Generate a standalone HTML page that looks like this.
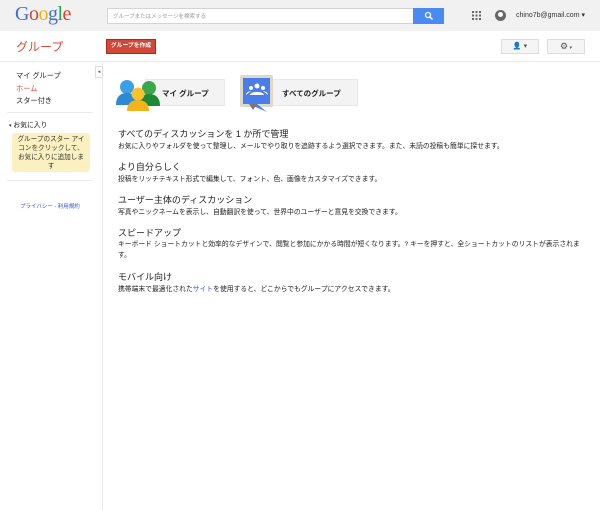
<!DOCTYPE html>
<html><head><meta charset="utf-8"><style>
*{margin:0;padding:0;box-sizing:border-box}
body{width:600px;height:510px;background:#fff;font-family:"Liberation Sans","Noto Sans CJK JP",sans-serif;color:#222;position:relative;overflow:hidden}
.a{position:absolute;white-space:nowrap}
.h{font-size:9px;color:#222}
.d{font-size:6.8px;color:#222}
</style></head><body>
<div class="a" style="left:0;top:0;width:600px;height:31px;background:#f1f1f1"></div>
<div class="a" style="left:15px;top:3px;font-family:'Liberation Serif',serif;font-size:20px;letter-spacing:-0.5px"><span style="color:#3b6fe0">G</span><span style="color:#d9412f">o</span><span style="color:#f2b400">o</span><span style="color:#3b6fe0">g</span><span style="color:#2ba14a">l</span><span style="color:#d9412f">e</span></div>
<div class="a" style="left:107px;top:8px;width:307px;height:16px;background:#fff;border:1px solid #d4d4d4"></div>
<div class="a" style="left:113px;top:12px;font-size:5.5px;color:#999">グループまたはメッセージを検索する</div>
<div class="a" style="left:413px;top:8px;width:31px;height:16px;background:#4a8af4"></div>
<svg class="a" style="left:424px;top:11px" width="10" height="10" viewBox="0 0 10 10"><circle cx="4" cy="4" r="2.5" fill="none" stroke="#fff" stroke-width="1.3"/><path d="M6 6L8.5 8.5" stroke="#fff" stroke-width="1.5"/></svg>
<svg class="a" style="left:472px;top:11px" width="9" height="9"><g fill="#666"><rect x="0" y="0" width="2" height="2"/><rect x="3.5" y="0" width="2" height="2"/><rect x="7" y="0" width="2" height="2"/><rect x="0" y="3.5" width="2" height="2"/><rect x="3.5" y="3.5" width="2" height="2"/><rect x="7" y="3.5" width="2" height="2"/><rect x="0" y="7" width="2" height="2"/><rect x="3.5" y="7" width="2" height="2"/><rect x="7" y="7" width="2" height="2"/></g></svg>
<div class="a" style="left:495px;top:10px;width:11px;height:11px;border-radius:50%;background:#666"></div>
<div class="a" style="left:498px;top:12px;width:5px;height:5px;border-radius:50%;background:#fff"></div>
<div class="a" style="left:516px;top:11px;font-size:7px;color:#333">chino7b@gmail.com ▾</div>
<div class="a" style="left:0;top:61px;width:600px;height:1px;background:#ebebeb"></div>
<div class="a" style="left:16px;top:38px;font-size:12px;color:#dd4b39">グループ</div>
<div class="a" style="left:106px;top:39px;width:50px;height:15px;background:#d14836;border:1px solid #b0281a;color:#fff;font-size:5.8px;font-weight:bold;text-align:center;line-height:13px">グループを作成</div>
<div class="a" style="left:501px;top:39px;width:38px;height:15px;background:#f5f5f5;border:1px solid #ddd;font-size:7px;color:#555;text-align:center;line-height:13px">👤 ▾</div>
<div class="a" style="left:547px;top:39px;width:38px;height:15px;background:#f5f5f5;border:1px solid #ddd;font-size:9px;color:#555;text-align:center;line-height:13px">⚙<span style="font-size:5px"> ▾</span></div>
<div class="a" style="left:102px;top:62px;width:1px;height:448px;background:#ebebeb"></div>
<div class="a" style="left:95px;top:66px;width:8px;height:12px;border:1px solid #ddd;background:#fff;font-size:5px;line-height:10px;text-align:center;color:#555">◂</div>
<div class="a" style="left:16px;top:70px;font-size:7.2px;line-height:12.5px;color:#222">マイ グループ<br><span style="color:#dd4b39">ホーム</span><br>スター付き</div>
<div class="a" style="left:7px;top:112px;width:86px;height:1px;background:#ebebeb"></div>
<div class="a" style="left:9px;top:119px;font-size:6.8px;color:#222"><span style="font-size:5px">▾</span> お気に入り</div>
<div class="a" style="left:12px;top:133px;width:78px;height:39px;background:#faf0c0;border-radius:3px;font-size:6.6px;line-height:9px;text-align:center;white-space:normal;padding:2px 5px 0;color:#333">グループのスター アイコンをクリックして、お気に入りに追加します</div>
<div class="a" style="left:7px;top:180px;width:86px;height:1px;background:#ebebeb"></div>
<div class="a" style="left:20px;top:202px;font-size:5.5px;color:#3355cc">プライバシー - 利用規約</div>
<div class="a" style="left:145px;top:79px;width:80px;height:27px;background:#f3f3f3;border:1px solid #e8e8e8"></div>
<div class="a" style="left:162px;top:88px;font-size:7.5px;font-weight:bold">マイ グループ</div>
<svg class="a" style="left:116px;top:79px" width="44" height="32" viewBox="0 0 44 32"><circle cx="11" cy="8" r="7" fill="#3aa0e8"/><path d="M0 26c0-9 5-12 11-12s11 3 11 12z" fill="#2b8ad6"/><circle cx="33" cy="9" r="7" fill="#3aa84a"/><path d="M22 27c0-9 5-12 11-12s11 3 11 12z" fill="#1d8a35"/><circle cx="22" cy="15" r="6.5" fill="#f9c22e"/><path d="M11 32c0-8 5-11 11-11s11 3 11 11z" fill="#f2b31b"/></svg>
<div class="a" style="left:270px;top:79px;width:88px;height:27px;background:#f3f3f3;border:1px solid #e8e8e8"></div>
<div class="a" style="left:282px;top:88px;font-size:7.5px;font-weight:bold">すべてのグループ</div>
<div class="a" style="left:240px;top:75px;width:33px;height:32px;background:#ddd8c8;border-radius:2px"></div>
<svg class="a" style="left:243px;top:78px" width="30" height="35" viewBox="0 0 30 35"><path d="M0 0h27v26H14L24 34 6 26H0z" fill="#4a7de8"/><path d="M6 26l4 6 4-6z" fill="#777"/><circle cx="14" cy="8" r="2.5" fill="#fff"/><circle cx="8" cy="10" r="2" fill="#fff"/><circle cx="20" cy="10" r="2" fill="#fff"/><path d="M7 17c0-4 14-4 14 0z M3 17c0-3 4-4 5-4 M25 17c0-3-4-4-5-4" fill="#fff"/></svg>
<div class="a h" style="left:118px;top:127px">すべてのディスカッションを 1 か所で管理</div>
<div class="a d" style="left:118px;top:140px">お気に入りやフォルダを使って整理し、メールでやり取りを追跡するよう選択できます。また、未読の投稿も簡単に探せます。</div>
<div class="a h" style="left:118px;top:160px">より自分らしく</div>
<div class="a d" style="left:118px;top:173px">投稿をリッチテキスト形式で編集して、フォント、色、画像をカスタマイズできます。</div>
<div class="a h" style="left:118px;top:193px">ユーザー主体のディスカッション</div>
<div class="a d" style="left:118px;top:206px">写真やニックネームを表示し、自動翻訳を使って、世界中のユーザーと意見を交換できます。</div>
<div class="a h" style="left:118px;top:226px">スピードアップ</div>
<div class="a d" style="left:118px;top:239px;line-height:11px">キーボード ショートカットと効率的なデザインで、閲覧と参加にかかる時間が短くなります。? キーを押すと、全ショートカットのリストが表示されま<br>す。</div>
<div class="a h" style="left:118px;top:270px">モバイル向け</div>
<div class="a d" style="left:118px;top:283px">携帯端末で最適化された<span style="color:#3355cc">サイト</span>を使用すると、どこからでもグループにアクセスできます。</div>
</body></html>
